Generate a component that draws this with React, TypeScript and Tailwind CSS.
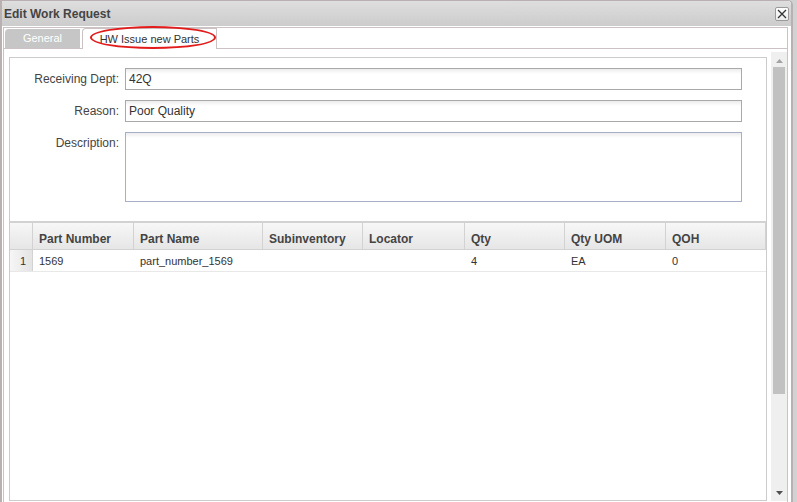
import React from 'react';

const columns = [
  { key: 'partNumber', label: 'Part Number', width: 'w-[101px]' },
  { key: 'partName', label: 'Part Name', width: 'w-[129px]' },
  { key: 'subinventory', label: 'Subinventory', width: 'w-[100px]' },
  { key: 'locator', label: 'Locator', width: 'w-[102px]' },
  { key: 'qty', label: 'Qty', width: 'w-[100px]' },
  { key: 'uom', label: 'Qty UOM', width: 'w-[101px]' },
  { key: 'qoh', label: 'QOH', width: 'w-[100px]' },
];

const rows: Record<string, string>[] = [
  { partNumber: '1569', partName: 'part_number_1569', subinventory: '', locator: '', qty: '4', uom: 'EA', qoh: '0' },
];

const FormRow: React.FC<{ label: string; value: string }> = ({ label, value }) => (
  <div className="flex items-center">
    <label className="w-[110px] pr-[1px] text-right text-[12px] text-[#444]">{label}</label>
    <div className="ml-[5px] w-[617px] h-[22px] border border-[#a9a9ab] bg-[linear-gradient(#ececec,#ffffff_5px)] px-[3px] flex items-center text-[12px] text-[#333]">
      {value}
    </div>
  </div>
);

export default function App() {
  return (
    <div className="w-[797px] h-[502px] overflow-hidden bg-[#d2d2d2] font-['Liberation_Sans',Arial,sans-serif]">
      {/* Dialog */}
      <div className="w-[793px] h-[530px] flex flex-col bg-white border-x-2 border-t border-[#b9b1b1] rounded-tr-[5px]">
        {/* Title bar */}
        <div className="h-[25px] shrink-0 flex items-center justify-between pl-[2px] pr-[2px] bg-gradient-to-b from-[#dedede] to-[#cccccc] rounded-tr-[4px]">
          <span className="text-[12px] font-bold text-[#444]">Edit Work Request</span>
          <button className="w-[14px] h-[14px] mt-[1px] flex items-center justify-center rounded-[2px] border border-[#9a9a9a] bg-gradient-to-b from-white to-[#ececec]">
            <svg width="10" height="10" viewBox="0 0 10 10">
              <path d="M1 1 L9 9 M9 1 L1 9" stroke="#333" strokeWidth="1.3" />
            </svg>
          </button>
        </div>

        <div className="flex flex-col flex-1 pt-[1px] ml-[1px] mr-[3px]">
          {/* Tabs */}
          <div className="relative h-[22px] shrink-0 flex items-end gap-[2px] pl-[1px] border border-[#cbc3c3] bg-white">
            <div className="w-[75px] h-[19px] rounded-tl-[4px] bg-[#c6c6c6] flex items-center justify-center text-[11px] text-white">
              General
            </div>
            <div className="relative z-10 w-[135px] h-[21px] mb-[-1px] rounded-tl-[4px] border-x border-t border-[#cbc3c3] bg-white flex items-center justify-center text-[11px] text-[#333]">
              HW Issue new Parts
            </div>
            {/* annotation */}
            <div className="absolute z-20 left-[86px] top-[-2px] w-[126px] h-[23px] rounded-[50%] border-2 border-[#e21b1b]" />
          </div>

          {/* Panel */}
          <div className="flex-1 flex border-x border-[#cbc3c3] pt-[3px]">
            <div className="flex-1 pt-[5px] pl-[5px] pr-[4px]">
              <div className="h-[444px] border border-[#cccccc] bg-white">
                {/* Form */}
                <div className="flex flex-col gap-[10px] pt-[10px]">
                  <FormRow label="Receiving Dept:" value="42Q" />
                  <FormRow label="Reason:" value="Poor Quality" />
                  <div className="flex items-start">
                    <label className="w-[110px] pr-[1px] pt-[2px] text-right text-[12px] text-[#444]">Description:</label>
                    <div className="ml-[5px] w-[617px] h-[70px] border border-[#a7aec6] bg-[linear-gradient(#ececec,#ffffff_5px)]" />
                  </div>
                </div>

                {/* Grid */}
                <div className="mt-[19px]">
                  <div className="flex h-[29px] border-t-2 border-b border-[#d2d2d2] bg-gradient-to-b from-[#f7f7f7] to-[#e6e6e6]">
                    <div className="w-[23px] border-r border-[#d2d2d2]" />
                    {columns.map((c) => (
                      <div
                        key={c.key}
                        className={`${c.width} border-r border-[#d2d2d2] pl-[6px] pt-[5px] flex items-center text-[12px] font-bold text-[#444]`}
                      >
                        {c.label}
                      </div>
                    ))}
                  </div>
                  {rows.map((r, i) => (
                    <div key={i} className="flex h-[22px] border-b border-[#e8e8e8]">
                      <div className="w-[23px] border-r border-[#d2d2d2] bg-gradient-to-r from-[#f6f6f6] to-[#e4e4e4] pr-[6px] pt-[1px] flex items-center justify-end text-[11px] text-[#333]">
                        {i + 1}
                      </div>
                      {columns.map((c) => (
                        <div
                          key={c.key}
                          className={`${c.width} pl-[6px] pt-[1px] flex items-center text-[11px] text-[#333]`}
                        >
                          {r[c.key]}
                        </div>
                      ))}
                    </div>
                  ))}
                </div>
              </div>
            </div>

            {/* Scrollbar */}
            <div className="w-[16px] h-[449px] bg-[#efefef] flex flex-col items-center pt-[7px] pb-[6px]">
              <svg width="7" height="4" viewBox="0 0 7 4">
                <path d="M3.5 0 L7 4 L0 4 Z" fill="#a3a3a3" />
              </svg>
              <div className="w-[12px] h-[327px] mt-[4px] bg-[#c1c1c1]" />
              <div className="flex-1" />
              <svg width="7" height="4" viewBox="0 0 7 4">
                <path d="M0 0 L7 0 L3.5 4 Z" fill="#505050" />
              </svg>
            </div>
          </div>
        </div>
      </div>
    </div>
  );
}
